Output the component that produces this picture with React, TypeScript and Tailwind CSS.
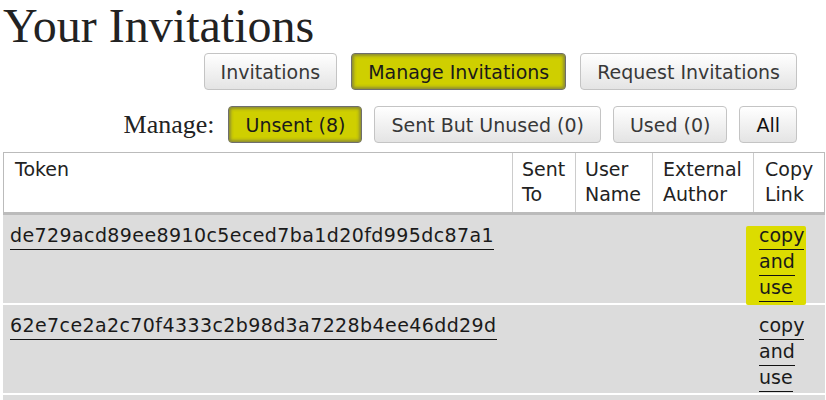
import React from "react";

const sans = { fontFamily: '"DejaVu Sans", sans-serif' };
const serif = { fontFamily: '"Liberation Serif", serif' };

function Btn({ label, active, dark }: { label: string; active?: boolean; dark?: boolean }) {
  const base =
    "h-[37px] flex items-center px-4 rounded-[4px] text-[19px] leading-[22px] whitespace-nowrap";
  if (active) {
    return (
      <div
        className={
          base +
          " border border-[#6e6e6e] bg-[#cfcf00] text-[#1a1a1a] shadow-[inset_0_0_3px_2px_rgba(90,90,90,0.55)]"
        }
      >
        {label}
      </div>
    );
  }
  return (
    <div
      className={
        base +
        " border border-[#c4c4c4] bg-linear-to-b from-white to-[#e4e4e4] " +
        (dark ? "text-[#111]" : "text-[#383838]")
      }
    >
      {label}
    </div>
  );
}

function LinkText({ children, wide }: { children: React.ReactNode; wide?: boolean }) {
  return (
    <span
      className={
        "border-b border-[#111] pb-[3px] text-[#1a1a1a]" + (wide ? " tracking-[0.4px]" : "")
      }
    >
      {children}
    </span>
  );
}

function Row({ token, highlight }: { token: string; highlight?: boolean }) {
  return (
    <div className="grid grid-cols-[509px_63px_77px_101px_72px] bg-[#dcdcdc] border-b-2 border-white text-[19px] leading-[26px]">
      <div className="pl-[7px] pt-[7px] pb-[3px]">
        <LinkText wide>{token}</LinkText>
      </div>
      <div />
      <div />
      <div />
      <div className="relative pl-[6px] pt-[7px] pb-[3px] pr-[4px]">
        {highlight && (
          <div className="absolute left-[-7px] top-[11px] w-[60px] h-[79px] bg-[#dcdc00] rounded-[2px]" />
        )}
        <div className="relative">
          <LinkText>copy and use</LinkText>
        </div>
      </div>
    </div>
  );
}

export default function App() {
  return (
    <div className="w-[826px] h-[400px] overflow-hidden bg-white" style={sans}>
      <h1
        className="text-[48px] leading-[52px] text-[#222] pl-[3px] m-0 font-normal"
        style={serif}
      >
        Your Invitations
      </h1>

      <div className="flex justify-end gap-[14px] pr-[29px] mt-[1px]">
        <Btn label="Invitations" />
        <Btn label="Manage Invitations" active />
        <Btn label="Request Invitations" />
      </div>

      <div className="flex justify-end items-center gap-[12px] pr-[29px] mt-[16px]">
        <span className="text-[26px] leading-[30px] text-[#222] mr-[2px] pt-[1px]" style={serif}>
          Manage:
        </span>
        <Btn label="Unsent (8)" active />
        <Btn label="Sent But Unused (0)" />
        <Btn label="Used (0)" />
        <Btn label="All" dark />
      </div>

      <div className="ml-[3px] w-[822px] mt-[9px]">
        <div className="grid grid-cols-[509px_63px_77px_101px_72px] h-[63px] border-t border-l border-r border-[#bbb] border-b-[3px] border-b-[#bbb] text-[19px] leading-[25px] text-[#222]">
          <div className="pl-[11px] pt-[4px] border-r border-[#ccc]">Token</div>
          <div className="pl-[9px] pt-[4px] border-r border-[#ccc]">Sent To</div>
          <div className="pl-[9px] pt-[4px] border-r border-[#ccc]">User Name</div>
          <div className="pl-[10px] pt-[4px] border-r border-[#ccc]">External Author</div>
          <div className="pl-[11px] pt-[4px]">Copy Link</div>
        </div>
        <Row token="de729acd89ee8910c5eced7ba1d20fd995dc87a1" highlight />
        <Row token="62e7ce2a2c70f4333c2b98d3a7228b4ee46dd29d" />
        <div className="h-[20px] bg-[#dcdcdc]" />
      </div>
    </div>
  );
}
